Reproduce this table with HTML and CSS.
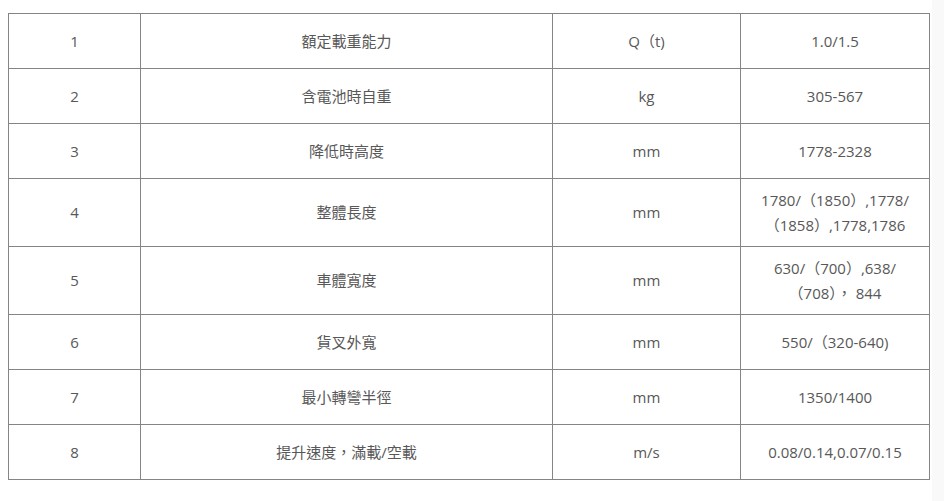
FILE: index.html
```html
<!DOCTYPE html>
<html lang="zh-Hant">
<head>
<meta charset="utf-8">
<link rel="stylesheet" href="styles.css">
</head>
<body>
<div class="page">
<table class="spec">
  <colgroup>
    <col class="c1"><col class="c2"><col class="c3"><col class="c4">
  </colgroup>
  <tr class="r"><td>1</td><td>額定載重能力</td><td>Q（t)</td><td>1.0/1.5</td></tr>
  <tr class="r"><td>2</td><td>含電池時自重</td><td>kg</td><td>305-567</td></tr>
  <tr class="r"><td>3</td><td>降低時高度</td><td>mm</td><td>1778-2328</td></tr>
  <tr class="r tall"><td>4</td><td>整體長度</td><td>mm</td><td>1780/（1850）,1778/<br>（1858）,1778,1786</td></tr>
  <tr class="r tall"><td>5</td><td>車體寬度</td><td>mm</td><td>630/（700）,638/<br>（708）， 844</td></tr>
  <tr class="r"><td>6</td><td>貨叉外寬</td><td>mm</td><td>550/（320-640)</td></tr>
  <tr class="r"><td>7</td><td>最小轉彎半徑</td><td>mm</td><td>1350/1400</td></tr>
  <tr class="r"><td>8</td><td>提升速度，滿載/空載</td><td>m/s</td><td>0.08/0.14,0.07/0.15</td></tr>
</table>
<div class="strip"></div>
</div>
</body>
</html>
```
FILE: styles.css
```css
html, body {
  margin: 0;
  padding: 0;
  background: #fff;
}
.page {
  display: flex;
  align-items: flex-start;
  padding: 13px 0 0 8px;
  height: 488px;
}
.spec {
  border-collapse: collapse;
  width: 921px;
  table-layout: fixed;
  font-family: "Open Sans", "Noto Sans CJK TC", sans-serif;
  font-size: 15px;
  color: #585858;
}
.c1 { width: 132px; }
.c2 { width: 412px; }
.c3 { width: 188px; }
.c4 { width: 189px; }
.spec td {
  border: 1px solid #858585;
  text-align: center;
  vertical-align: middle;
  padding: 0 6px;
  line-height: 25px;
}
.r { height: 55px; }
.r.tall { height: 68px; }
.strip {
  margin-left: auto;
  width: 12px;
  align-self: stretch;
  margin-top: -13px;
  background: #f9f9f9;
}
```
